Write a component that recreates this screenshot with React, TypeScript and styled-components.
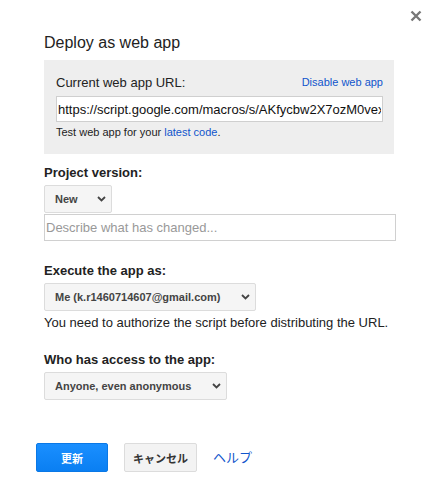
import React from 'react';
import styled, { createGlobalStyle } from 'styled-components';

const GlobalStyle = createGlobalStyle`
  html, body {
    margin: 0;
    padding: 0;
    background: #fff;
  }
  body {
    font-family: "Liberation Sans", Arial, "Noto Sans CJK JP", sans-serif;
    color: #222;
  }
`;

const Chevron = () => (
  <svg width="9" height="6" viewBox="0 0 9 6">
    <path d="M1 1 L4.5 4.5 L8 1" fill="none" stroke="#444" strokeWidth="1.8" />
  </svg>
);

const CloseIcon = () => (
  <svg width="12" height="12" viewBox="0 0 12 12">
    <path d="M1.5 1.5 L10.5 10.5 M10.5 1.5 L1.5 10.5" stroke="#777" strokeWidth="2.4" />
  </svg>
);

const Select = ({ label, width }: { label: string; width: number }) => (
  <SelectBox $width={width}>
    <span>{label}</span>
    <Chevron />
  </SelectBox>
);

const App = () => {
  return (
    <>
      <GlobalStyle />
      <Dialog>
        <Close>
          <CloseIcon />
        </Close>
        <Title>Deploy as web app</Title>
        <UrlPanel>
          <UrlHeader>
            <UrlLabel>Current web app URL:</UrlLabel>
            <Link $size={11}>Disable web app</Link>
          </UrlHeader>
          <UrlInput readOnly value="https://script.google.com/macros/s/AKfycbw2X7ozM0vexAbCdEfGh/exec" />
          <Hint>
            Test web app for your <Link $size={11}>latest code</Link>.
          </Hint>
        </UrlPanel>

        <Section $top={11}>
          <Label>Project version:</Label>
          <Select label="New" width={68} />
          <TextField placeholder="Describe what has changed..." />
        </Section>

        <Section $top={22}>
          <Label>Execute the app as:</Label>
          <Select label="Me (k.r1460714607@gmail.com)" width={212} />
          <Note>You need to authorize the script before distributing the URL.</Note>
        </Section>

        <Section $top={21}>
          <Label>Who has access to the app:</Label>
          <Select label="Anyone, even anonymous" width={183} />
        </Section>

        <Actions>
          <PrimaryButton>更新</PrimaryButton>
          <Button>キャンセル</Button>
          <Link $size={13}>ヘルプ</Link>
        </Actions>
      </Dialog>
    </>
  );
};

const Dialog = styled.div`
  position: relative;
  width: 436px;
  height: 487px;
  box-sizing: border-box;
  padding: 33px 0 0 44px;
  background: #fff;
`;

const Close = styled.div`
  position: absolute;
  top: 10px;
  right: 14px;
  width: 12px;
  height: 12px;
  display: flex;
`;

const Title = styled.div`
  font-size: 16px;
  line-height: 20px;
  color: #222;
`;

const UrlPanel = styled.div`
  margin-top: 7px;
  width: 350px;
  box-sizing: border-box;
  background: #eeeeee;
  padding: 15px 11px 15px 12px;
`;

const UrlHeader = styled.div`
  display: flex;
  justify-content: space-between;
  align-items: flex-start;
`;

const UrlLabel = styled.span`
  font-size: 13px;
  line-height: 16px;
  color: #222;
`;

const Link = styled.a<{ $size: number }>`
  font-size: ${(p) => p.$size}px;
  line-height: 14px;
  color: #1155cc;
  cursor: pointer;
  text-decoration: none;
`;

const UrlInput = styled.input`
  display: block;
  margin-top: 5px;
  width: 327px;
  height: 26px;
  box-sizing: border-box;
  border: 1px solid #cfcfcf;
  padding: 0 1px;
  font-family: "Liberation Sans", Arial, sans-serif;
  font-size: 13px;
  color: #111;
  background: #fff;
  outline: none;
`;

const Hint = styled.div`
  margin-top: 3px;
  font-size: 11px;
  line-height: 14px;
  color: #222;
`;

const Section = styled.div<{ $top: number }>`
  margin-top: ${(p) => p.$top}px;
  display: flex;
  flex-direction: column;
  align-items: flex-start;
`;

const Label = styled.div`
  font-size: 13px;
  line-height: 16px;
  font-weight: bold;
  color: #222;
  margin-bottom: 4px;
`;

const SelectBox = styled.div<{ $width: number }>`
  width: ${(p) => p.$width}px;
  height: 28px;
  box-sizing: border-box;
  display: flex;
  align-items: center;
  justify-content: space-between;
  padding: 0 5px 0 10px;
  background: #f5f5f5;
  border: 1px solid #dcdcdc;
  border-radius: 2px;
  font-size: 11px;
  font-weight: bold;
  color: #444;
`;

const TextField = styled.input`
  display: block;
  margin-top: 1px;
  width: 352px;
  height: 27px;
  box-sizing: border-box;
  border: 1px solid #d0d0d0;
  padding: 0 1px;
  font-family: "Liberation Sans", Arial, sans-serif;
  font-size: 13px;
  outline: none;
  &::placeholder {
    color: #999;
  }
`;

const Note = styled.div`
  margin-top: 4px;
  font-size: 13px;
  line-height: 16px;
  color: #222;
`;

const Actions = styled.div`
  margin: 43px 0 0 -8px;
  display: flex;
  align-items: center;
  gap: 16px;
`;

const Button = styled.div`
  width: 73px;
  height: 29px;
  box-sizing: border-box;
  display: flex;
  align-items: center;
  justify-content: center;
  background: #f3f3f3;
  border: 1px solid #dcdcdc;
  border-radius: 2px;
  font-size: 11px;
  font-weight: bold;
  color: #333;
  font-family: "Liberation Sans", "Noto Sans CJK JP", sans-serif;
`;

const PrimaryButton = styled(Button)`
  width: 72px;
  background: linear-gradient(#1a8fff, #0a7ff2);
  border-color: #0a78e6;
  color: #fff;
`;

export default App;
